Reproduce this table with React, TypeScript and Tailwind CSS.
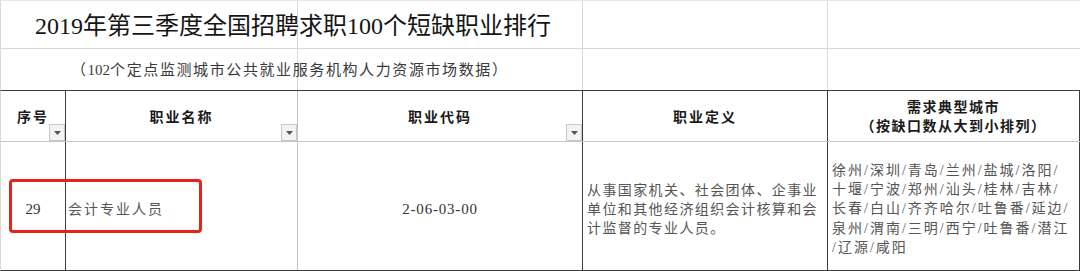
import React from "react"

const LIGHT = "border-[#d9d9d9]"

const CITY_LINES = [
  "徐州/深圳/青岛/兰州/盐城/洛阳/",
  "十堰/宁波/郑州/汕头/桂林/吉林/",
  "长春/白山/齐齐哈尔/吐鲁番/延边/",
  "泉州/渭南/三明/西宁/吐鲁番/潜江",
  "/辽源/咸阳",
]

const DEF_LINES = [
  "从事国家机关、社会团体、企事业",
  "单位和其他经济组织会计核算和会",
  "计监督的专业人员。",
]

function FilterButton() {
  return (
    <div className="absolute right-0 bottom-0 w-[16px] h-[17px] border border-[#c9c9c9] bg-[#f3f3f3] flex items-center justify-center">
      <svg width="7" height="4" viewBox="0 0 7 4">
        <path d="M0 0 L7 0 L3.5 4 Z" fill="#555" />
      </svg>
    </div>
  )
}

function HeaderCell({ label, border, filter }: { label: string; border: string; filter?: boolean }) {
  return (
    <div className={`relative flex items-center justify-center pt-[3px] border-r ${border}`}>
      <span className="text-[14px] leading-[19px] font-bold tracking-[2px] text-[#1a1a1a]">{label}</span>
      {filter && <FilterButton />}
    </div>
  )
}

export default function App() {
  return (
    <div className="relative w-[1080px] h-[271px] overflow-hidden bg-white font-['Liberation_Serif','Noto_Sans_CJK_SC',serif]">
      {/* Title row */}
      <div className={`grid grid-cols-[297px_285px_245px_252px] h-[49px] border-t border-b border-l ${LIGHT} border-t-[#e6e6e6]`}>
        <div className={`flex items-center pt-[3px] pl-[34px] whitespace-nowrap border-r ${LIGHT}`}>
          <span className="text-[24px] leading-[28px] text-[#151515]">2019年第三季度全国招聘求职100个短缺职业排行</span>
        </div>
        <div className={`border-r ${LIGHT}`} />
        <div className={`border-r ${LIGHT}`} />
        <div />
      </div>

      {/* Subtitle row */}
      <div className={`grid grid-cols-[297px_285px_245px_252px] h-[42px] border-b border-b-[#3c3c3c] border-l ${LIGHT}`}>
        <div className={`flex items-center pl-[70px] whitespace-nowrap border-r ${LIGHT}`}>
          <span className="text-[15px] leading-[20px] tracking-[1.6px] text-[#3a3a3a]">
            （<span className="tracking-[0px]">102</span>个定点监测城市公共就业服务机构人力资源市场数据）
          </span>
        </div>
        <div className={`border-r ${LIGHT}`} />
        <div className={`border-r ${LIGHT}`} />
        <div />
      </div>

      {/* Header row */}
      <div className="grid grid-cols-[65px_232px_285px_245px_252px] h-[51px] border-b border-b-[#c6c6c6] border-l border-l-[#d9d9d9]">
        <HeaderCell label="序号" border="border-[#3c3c3c]" filter />
        <HeaderCell label="职业名称" border="border-[#c2c2c2]" filter />
        <HeaderCell label="职业代码" border="border-[#3c3c3c]" filter />
        <HeaderCell label="职业定义" border="border-[#3c3c3c]" />
        <div className="flex flex-col items-center justify-center pt-[2px] border-r border-[#3c3c3c] text-[14px] leading-[19px] font-bold tracking-[1.5px] text-[#1a1a1a]">
          <span>需求典型城市</span>
          <span>（按缺口数从大到小排列）</span>
        </div>
      </div>

      {/* Data row */}
      <div className="grid grid-cols-[65px_232px_285px_245px_252px] h-[129px] border-b border-b-[#3c3c3c] border-l border-l-[#d9d9d9] text-[#555]">
        <div className="flex items-center justify-center pt-[6px] border-r border-[#3c3c3c]">
          <span className="text-[15px] leading-[19px] text-[#333]">29</span>
        </div>
        <div className="flex items-center pl-[2px] pt-[6px] border-r border-[#c2c2c2]">
          <span className="text-[14px] leading-[19px] tracking-[2px]">会计专业人员</span>
        </div>
        <div className="flex items-center justify-center pt-[6px] border-r border-[#3c3c3c]">
          <span className="text-[15px] leading-[19px] tracking-[0.8px] text-[#333]">2-06-03-00</span>
        </div>
        <div className="flex flex-col justify-center pl-[4px] pt-[6px] border-r border-[#3c3c3c] text-[14px] leading-[19px] tracking-[1.4px] whitespace-nowrap">
          {DEF_LINES.map(l => <span key={l}>{l}</span>)}
        </div>
        <div className="flex flex-col justify-center pl-[4px] pt-[6px] border-r border-[#3c3c3c] text-[14px] leading-[19.3px] tracking-[2px] whitespace-nowrap">
          {CITY_LINES.map(l => <span key={l}>{l}</span>)}
        </div>
      </div>

      {/* highlight annotation */}
      <div className="absolute left-[9px] top-[179px] w-[193px] h-[54px] border-[3px] border-[#e5231b] rounded-[4px]" />
    </div>
  )
}
